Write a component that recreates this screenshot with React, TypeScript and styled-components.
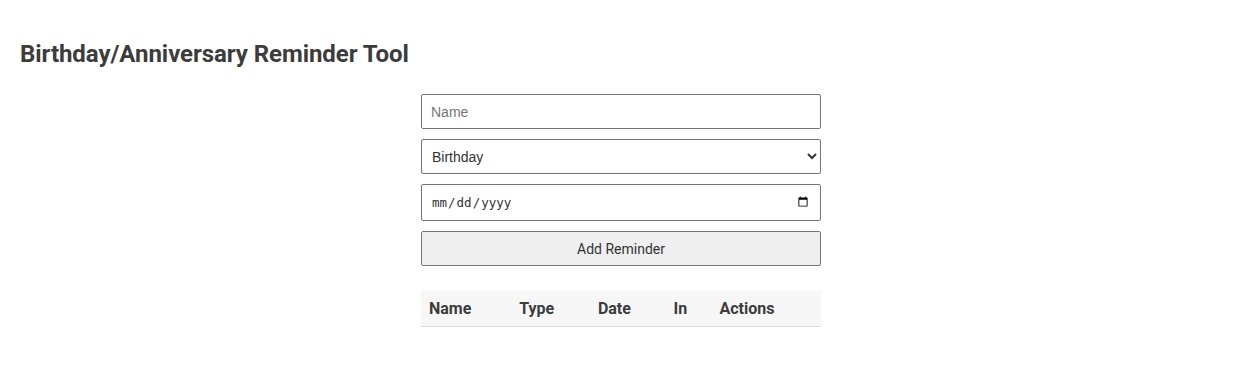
import React, { useState } from "react";
import styled, { createGlobalStyle } from "styled-components";

const GlobalStyle = createGlobalStyle`
  body {
    margin: 0;
    padding: 20px;
    font-family: Roboto, "Liberation Sans", Arial, sans-serif;
    color: #3c3c3c;
    background: #fff;
  }
  * {
    box-sizing: border-box;
  }
`;

const Title = styled.h1`
  font-size: 24px;
  font-weight: 700;
  margin: 20px 0 26px;
  letter-spacing: -0.05px;
`;

const Panel = styled.div`
  width: 402px;
  margin: 0 auto;
  padding-left: 2px;
`;

const Form = styled.form`
  display: flex;
  flex-direction: column;
  gap: 10px;
`;

const Field = styled.input<{ $mono?: boolean }>`
  width: 100%;
  height: ${(p) => (p.$mono ? "37px" : "35px")};
  padding: 0 9px;
  border: 1px solid #767676;
  border-radius: 2px;
  font-family: ${(p) =>
    p.$mono ? '"DejaVu Sans Mono", monospace' : '"Liberation Sans", Arial, sans-serif'};
  font-size: ${(p) => (p.$mono ? "12.5px" : "14px")};
  color: #333;
`;

const Select = styled.select`
  width: 100%;
  height: 35px;
  padding: 0 6px;
  border: 1px solid #767676;
  border-radius: 2px;
  font-family: "Liberation Sans", Arial, sans-serif;
  font-size: 14px;
  color: #333;
  background: #fff;
`;

const SubmitButton = styled.button`
  width: 100%;
  height: 35px;
  border: 1px solid #767676;
  border-radius: 2px;
  background: #efefef;
  font-family: Roboto, sans-serif;
  font-size: 14px;
  color: #333;
`;

const Table = styled.table`
  width: 100%;
  margin-top: 25px;
  border-collapse: collapse;
`;

const HeadCell = styled.th`
  text-align: left;
  padding: 8px;
  font-size: 16px;
  font-weight: 700;
  background: #f7f7f7;
  border-bottom: 1px solid #ddd;
`;

interface IReminder {
  name: string;
  type: string;
  date: string;
}

const App = () => {
  const [name, setName] = useState<string>("");
  const [type, setType] = useState<string>("Birthday");
  const [date, setDate] = useState<string>("");
  const [reminders, setReminders] = useState<IReminder[]>([]);

  const addReminder = (e: React.FormEvent) => {
    e.preventDefault();
    if (!name || !date) return;
    setReminders([...reminders, { name, type, date }]);
    setName("");
    setDate("");
  };

  return (
    <>
      <GlobalStyle />
      <Title>Birthday/Anniversary Reminder Tool</Title>
      <Panel>
        <Form onSubmit={addReminder}>
          <Field
            type="text"
            placeholder="Name"
            value={name}
            onChange={(e) => setName(e.target.value)}
          />
          <Select value={type} onChange={(e) => setType(e.target.value)}>
            <option>Birthday</option>
            <option>Anniversary</option>
          </Select>
          <Field
            $mono
            type="date"
            value={date}
            onChange={(e) => setDate(e.target.value)}
          />
          <SubmitButton type="submit">Add Reminder</SubmitButton>
        </Form>
        <Table>
          <thead>
            <tr>
              <HeadCell>Name</HeadCell>
              <HeadCell>Type</HeadCell>
              <HeadCell>Date</HeadCell>
              <HeadCell>In</HeadCell>
              <HeadCell>Actions</HeadCell>
            </tr>
          </thead>
          <tbody>
            {reminders.map((r, i) => (
              <tr key={i}>
                <td>{r.name}</td>
                <td>{r.type}</td>
                <td>{r.date}</td>
                <td></td>
                <td></td>
              </tr>
            ))}
          </tbody>
        </Table>
      </Panel>
    </>
  );
};

export default App;
